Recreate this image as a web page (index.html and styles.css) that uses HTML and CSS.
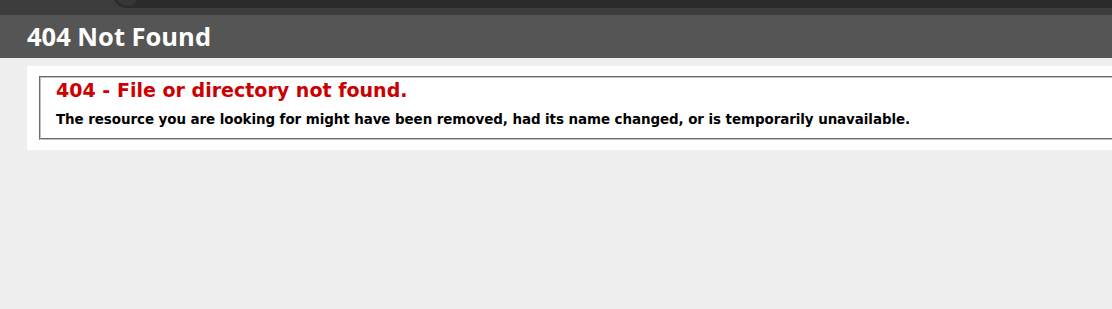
FILE: index.html
```html
<!DOCTYPE html>
<html>
<head>
<meta charset="utf-8">
<title>404 - File or directory not found.</title>
<link rel="stylesheet" href="styles.css">
</head>
<body>
<div class="topstrip"><div class="search"><span class="search-dot"></span></div></div>
<div class="header"><h1>404 Not Found</h1></div>
<div class="content">
  <div class="content-container">
    <fieldset>
      <h2>404 - File or directory not found.</h2>
      <h3>The resource you are looking for might have been removed, had its name changed, or is temporarily unavailable.</h3>
    </fieldset>
  </div>
</div>
</body>
</html>
```
FILE: styles.css
```css
html, body { margin: 0; padding: 0; }
body {
  background: #eeeeee;
  font-family: "DejaVu Sans", Verdana, sans-serif;
  font-size: 11.2px;
  overflow: hidden;
}
.topstrip {
  height: 15px;
  background: #3c3c3c;
  position: relative;
  overflow: hidden;
}
.search {
  position: absolute;
  left: 113px;
  top: -20px;
  right: 0;
  height: 28px;
  background: #2b2b2b;
  border-radius: 14px 0 0 14px;
}
.search-dot {
  position: absolute;
  left: 3px;
  top: 4px;
  width: 22px;
  height: 22px;
  border-radius: 50%;
  background: #363636;
}
.header {
  background: #555555;
  padding: 6px 27px;
  font-family: "Open Sans", "DejaVu Sans", sans-serif;
  color: #ffffff;
}
h1 {
  margin: 0;
  font-size: 25.5px;
  line-height: 31px;
  font-weight: 700;
  color: #ffffff;
}
.content {
  margin-left: 27px;
}
.content-container {
  background: #ffffff;
  margin-top: 8px;
  padding: 10px 0 10px 10px;
}
fieldset {
  margin: 0 0 0 2px;
  padding: 0 15px 10px 15px;
  border: 2px groove #c0c0c0;
  border-right: none;
}
h2 {
  margin: 0;
  font-size: 19.04px;
  line-height: 24px;
  color: #cc0000;
  font-weight: 700;
}
h3 {
  margin: 10px 0 0 0;
  font-size: 13.44px;
  line-height: 16px;
  letter-spacing: -0.07px;
  color: #000000;
  font-weight: 700;
  white-space: nowrap;
}
```
